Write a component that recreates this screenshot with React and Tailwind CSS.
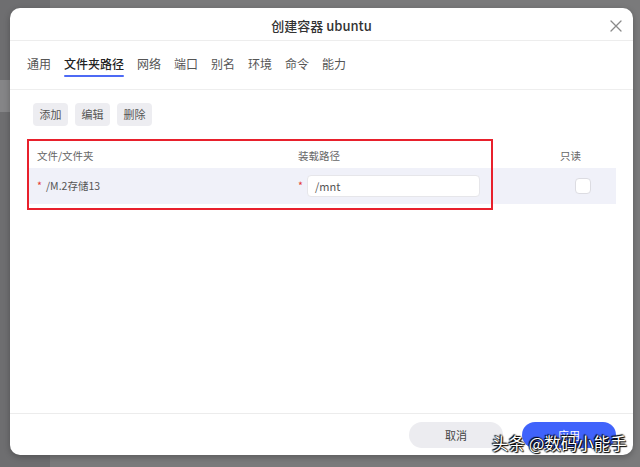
import React from "react";

const tabs = ["通用", "文件夹路径", "网络", "端口", "别名", "环境", "命令", "能力"];

const App = () => {
  return (
    <div
      className="relative w-[640px] h-[467px] overflow-hidden bg-[#7a7a7b] flex"
      style={{ fontFamily: '"Noto Sans CJK SC", "Noto Sans", sans-serif' }}
    >
      {/* page behind the dialog */}
      <div className="w-[50px] h-full bg-[#6e6e70] flex flex-col">
        <div className="h-[80px]"></div>
        <div className="h-[32px] bg-[#858587]"></div>
      </div>

      {/* Dialog */}
      <div className="absolute left-[10px] top-[8px] w-[623px] h-[447px] bg-white rounded-[10px] shadow-[0_2px_6px_rgba(0,0,0,0.25)] flex flex-col">
        {/* Header */}
        <div className="relative h-[33px] shrink-0 flex items-center justify-center pt-[3px] border-b border-[#ededed]">
          <span className="text-[13px] text-[#333] font-medium">创建容器 ubuntu</span>
          <button className="absolute right-[10px] top-[11px] w-[14px] h-[14px] flex items-center justify-center">
            <svg width="12" height="12" viewBox="0 0 12 12" fill="none" stroke="#8a8a8a" strokeWidth="1.3" strokeLinecap="round">
              <path d="M1 1 L11 11 M11 1 L1 11" />
            </svg>
          </button>
        </div>

        {/* Tabs */}
        <div className="h-[49px] shrink-0 border-b border-[#eeeeee] px-[17px] pt-[13px] flex gap-[13px]">
          {tabs.map((t) => (
            <div key={t} className="flex flex-col">
              <span
                className={`text-[12px] leading-[20px] ${t === "文件夹路径" ? "text-[#222] font-medium" : "text-[#555]"}`}
              >
                {t}
              </span>
              {t === "文件夹路径" && <div className="mt-[1px] h-[2px] bg-[#4d6af5] rounded-full"></div>}
            </div>
          ))}
        </div>

        {/* Content */}
        <div className="flex-1 px-[17px] pt-[13px]">
          <div className="flex gap-[7px] pl-[6px]">
            {["添加", "编辑", "删除"].map((b) => (
              <button
                key={b}
                className="h-[23px] w-[35px] rounded-[4px] bg-[#ededf1] text-[11px] text-[#555] flex items-center justify-center"
              >
                {b}
              </button>
            ))}
          </div>

          {/* Table */}
          <div className="relative mt-[18px]">
            <div className="grid grid-cols-[261px_262px_1fr] pl-[10px] h-[24px] items-center text-[10.5px] text-[#666]">
              <span>文件/文件夹</span>
              <span>装载路径</span>
              <span>只读</span>
            </div>
            <div className="grid grid-cols-[261px_262px_1fr] pl-[10px] h-[36px] items-center bg-[#f0f1f9] text-[10.5px] text-[#555]">
              <div className="flex items-center">
                <span className="text-[#e53935] w-[9px]">*</span>
                <span>/M.2存储13</span>
              </div>
              <div className="flex items-center">
                <span className="text-[#e53935] w-[9px]">*</span>
                <div className="w-[173px] h-[22px] bg-white rounded-[4px] border border-[#e6e6ea] flex items-center px-[7px] text-[11px] text-[#555]">
                  /mnt
                </div>
              </div>
              <div className="pl-[15px] flex items-center">
                <div className="w-[16px] h-[16px] bg-white rounded-[4px] border border-[#dcdce2]"></div>
              </div>
            </div>

            {/* red annotation box */}
            <div className="absolute left-0 top-[-5px] w-[466px] h-[71px] border-2 border-[#e8202c] pointer-events-none"></div>
          </div>
        </div>

        {/* Footer */}
        <div className="h-[42px] shrink-0 border-t border-[#ececec] flex justify-end items-start gap-[19px] pt-[8px] pr-[17px]">
          <button className="w-[94px] h-[26px] rounded-full bg-[#ececf0] text-[11px] text-[#444]">取消</button>
          <button className="w-[94px] h-[26px] rounded-full bg-[#4063fb] text-[11px] text-white">应用</button>
        </div>
      </div>

      {/* watermark */}
      <div className="absolute left-[492px] top-[431px] whitespace-nowrap text-[16.5px] leading-[24px] text-white [text-shadow:0_0_2px_#000,0_0_1px_#000,1px_1px_1px_#000,-1px_-1px_1px_#000]">
        头条 @数码小能手
      </div>
    </div>
  );
};

export default App;
